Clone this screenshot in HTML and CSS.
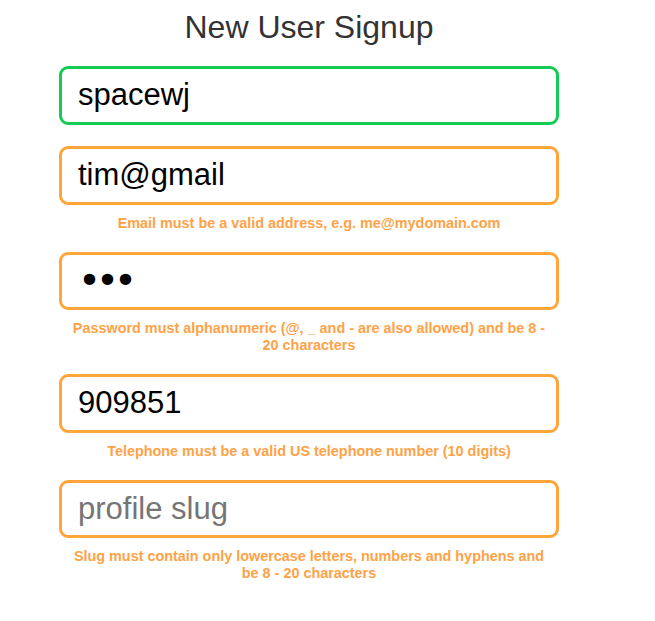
FILE: index.html
```html
<!DOCTYPE html>
<html lang="en">
<head>
<meta charset="utf-8">
<title>New User Signup</title>
<link rel="stylesheet" href="styles.css">
</head>
<body>
<form class="signup">
  <h1 class="title">New User Signup</h1>
  <div class="field">
    <input class="input input-valid" type="text" value="spacewj" placeholder="username">
  </div>
  <div class="field">
    <input class="input input-invalid" type="text" value="tim@gmail" placeholder="email">
    <p class="error">Email must be a valid address, e.g. me@mydomain.com</p>
  </div>
  <div class="field">
    <input class="input input-invalid input-password" type="password" value="abc" placeholder="password">
    <p class="error">Password must alphanumeric (@, _ and - are also allowed) and be 8 - 20 characters</p>
  </div>
  <div class="field">
    <input class="input input-invalid" type="text" value="909851" placeholder="telephone">
    <p class="error">Telephone must be a valid US telephone number (10 digits)</p>
  </div>
  <div class="field">
    <input class="input input-invalid" type="text" value="" placeholder="profile slug">
    <p class="error">Slug must contain only lowercase letters, numbers and hyphens and be 8 - 20 characters</p>
  </div>
</form>
</body>
</html>
```

FILE: styles.css
```css
html, body {
  margin: 0;
  padding: 0;
  background: #ffffff;
}

body {
  font-family: "Liberation Sans", Arial, Helvetica, sans-serif;
}

.signup {
  width: 500px;
  margin: 0 0 0 59px;
  padding-top: 9px;
  display: flex;
  flex-direction: column;
  gap: 20px;
}

.title {
  margin: 0 0 1px 0;
  font-size: 32px;
  line-height: 36px;
  font-weight: normal;
  color: #333333;
  text-align: center;
}

.field {
  display: flex;
  flex-direction: column;
}

.field:first-of-type {
  margin-bottom: 1.5px;
}

.input {
  box-sizing: border-box;
  width: 100%;
  height: 58.5px;
  margin: 0;
  padding: 0 16px;
  border: 3px solid #ffa53a;
  border-radius: 9px;
  background: #ffffff;
  font-family: "Liberation Sans", Arial, Helvetica, sans-serif;
  font-size: 31px;
  color: #000000;
  outline: none;
}

.input::placeholder {
  color: #757575;
  opacity: 1;
}

.input-valid {
  border-color: #14cc55;
}

.input-invalid {
  border-color: #ffa53a;
}

.input-password {
  font-family: "DejaVu Sans", sans-serif;
  font-size: 39px;
  letter-spacing: -5px;
}

.error {
  margin: 10px 0 0 0;
  padding: 0 10px;
  font-size: 14.4px;
  line-height: 17px;
  font-weight: bold;
  color: #ffa247;
  text-align: center;
}
```
